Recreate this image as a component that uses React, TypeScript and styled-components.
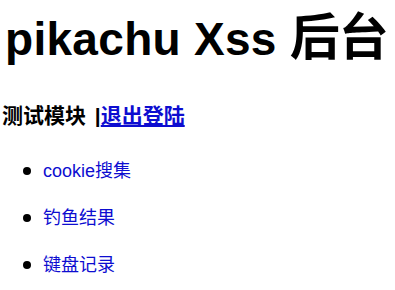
import React from 'react';
import styled, { createGlobalStyle } from 'styled-components';

const GlobalStyle = createGlobalStyle`
  html, body {
    margin: 0;
    padding: 0;
    background: #fff;
  }
  body {
    font-family: "Liberation Sans", Arial, "Noto Sans CJK SC", sans-serif;
    color: #000;
  }
`;

const Page = styled.div`
  padding: 15px 0 0 2px;
`;

const Title = styled.h1`
  margin: 0 0 0 3px;
  font-size: 46px;
  line-height: 46px;
  font-weight: bold;
  letter-spacing: 0.3px;
  white-space: nowrap;
`;

// the CJK part of the heading is drawn a little larger in the original
const TitleCjk = styled.span`
  font-size: 50px;
  letter-spacing: -1px;
`;

const NavLine = styled.h3`
  margin: 42px 0 0;
  font-size: 21px;
  line-height: 24px;
  font-weight: bold;
  word-spacing: 3px;
`;

const NavLink = styled.a`
  color: #0d0dd0;
  text-decoration: underline;
`;

const MenuList = styled.ul`
  list-style: none;
  margin: 33px 0 0;
  padding: 0 0 0 21px;
  display: flex;
  flex-direction: column;
  gap: 26px;
`;

const MenuItem = styled.li`
  display: flex;
  align-items: center;
  gap: 12px;
  font-size: 18px;
  line-height: 21px;
`;

const Bullet = styled.span`
  width: 8px;
  height: 8px;
  border-radius: 50%;
  background: #000;
  flex: none;
  margin-top: -2px;
`;

const MenuLink = styled.a`
  color: #0d0dd0;
  text-decoration: none;
`;

const items = ['cookie搜集', '钓鱼结果', '键盘记录'];

export default function App() {
  return (
    <>
      <GlobalStyle />
      <Page>
        <Title>
          pikachu Xss <TitleCjk>后台</TitleCjk>
        </Title>
        <NavLine>
          测试模块 |<NavLink href="#">退出登陆</NavLink>
        </NavLine>
        <MenuList>
          {items.map((label) => (
            <MenuItem key={label}>
              <Bullet />
              <MenuLink href="#">{label}</MenuLink>
            </MenuItem>
          ))}
        </MenuList>
      </Page>
    </>
  );
}
